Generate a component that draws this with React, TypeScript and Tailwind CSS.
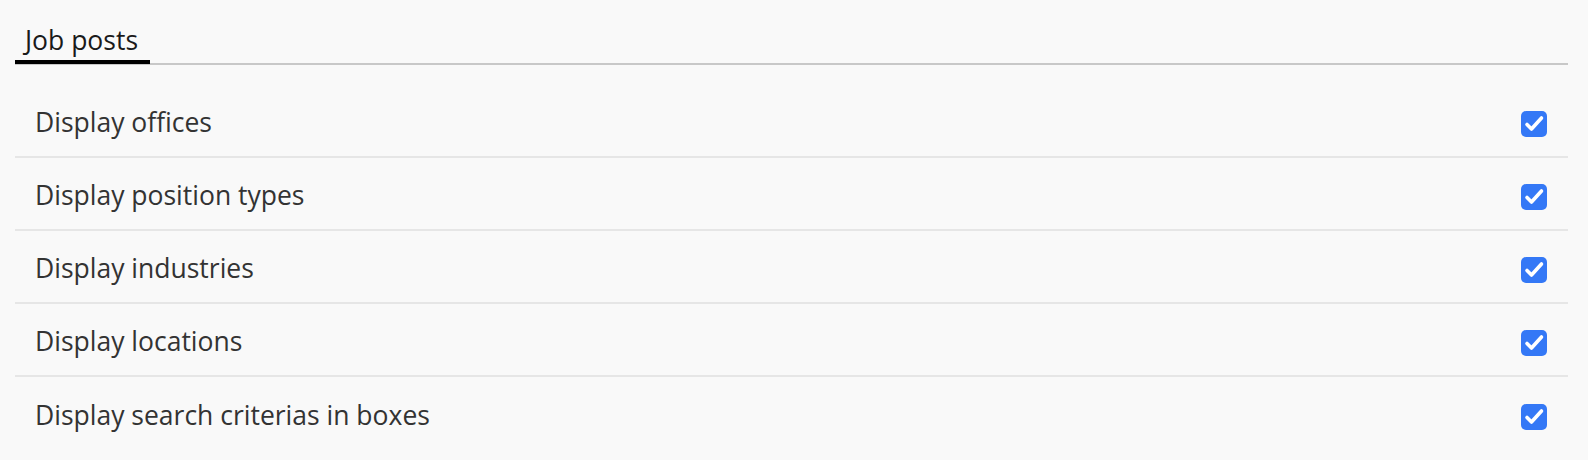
import React from "react";

const rows = [
  "Display offices",
  "Display position types",
  "Display industries",
  "Display locations",
  "Display search criterias in boxes",
];

function Check() {
  return (
    <div className="w-[26px] h-[26px] mt-[2px] rounded-[5px] bg-[#3478f6]">
      <svg width="26" height="26" viewBox="0 0 26 26" fill="none">
        <path d="M6 13.5 L10.5 18 L20.5 7" stroke="white" strokeWidth="3.6" strokeLinecap="round" strokeLinejoin="round" />
      </svg>
    </div>
  );
}

export default function App() {
  return (
    <div className="w-[1588px] h-[460px] bg-[#f9f9f9] pl-[15px] pr-[20px] pt-[22px] overflow-hidden" style={{ fontFamily: '"Open Sans", "Noto Sans", sans-serif' }}>
      <div className="flex border-b-2 border-[#c8c8c8]">
        <div className="pl-[10px] pr-[12px] pb-[2px] border-b-4 border-black -mb-[1px] text-[26.5px] leading-[36px] text-[#1a1a1a]">Job posts</div>
      </div>
      <div className="mt-[20px]">
        {rows.map((r, i) => (
          <div key={r} className={`h-[73px] flex items-center justify-between pl-[20px] pr-[21px] pt-[4px] ${i < rows.length - 1 ? "border-b-2 border-[#e6e6e6]" : ""}`}>
            <span className="text-[26.5px] text-[#333333]">{r}</span>
            <Check />
          </div>
        ))}
      </div>
    </div>
  );
}
